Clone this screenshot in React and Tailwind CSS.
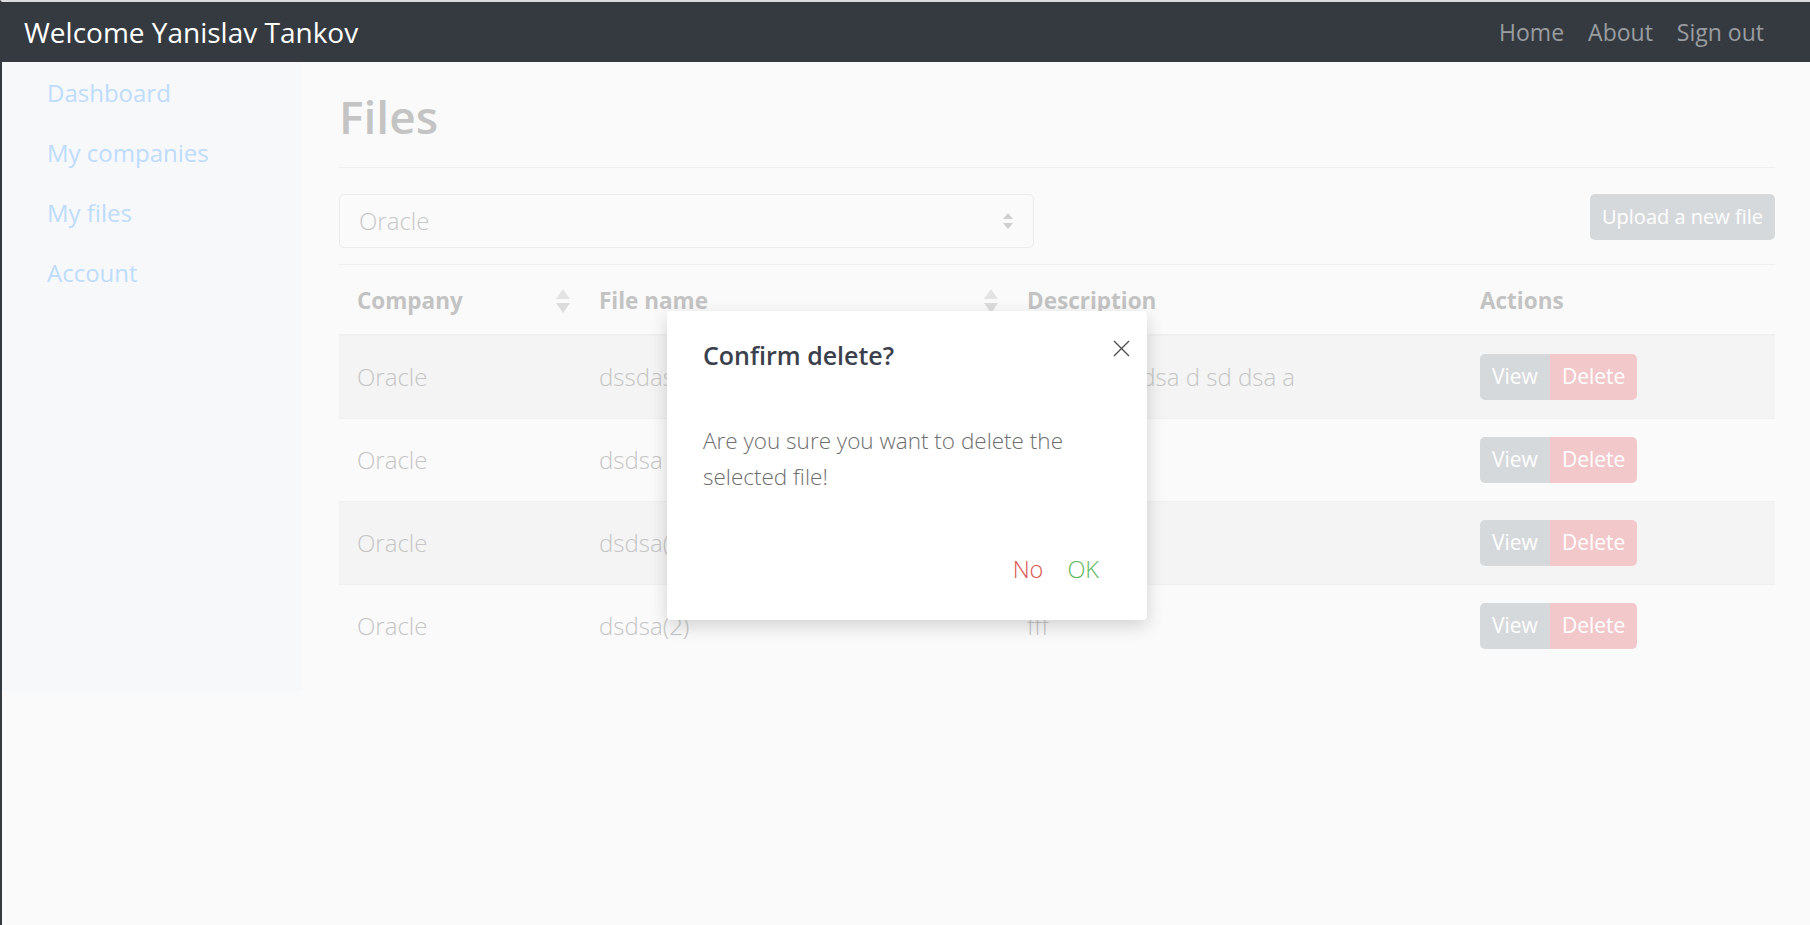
import React from 'react';

const rows = [
  { company: 'Oracle', file: 'dssdasd', desc: 'dsads dsa dsa d sd dsa a', striped: true },
  { company: 'Oracle', file: 'dsdsa', desc: '', striped: false },
  { company: 'Oracle', file: 'dsdsa(1)', desc: '', striped: true },
  { company: 'Oracle', file: 'dsdsa(2)', desc: 'fff', striped: false },
];

const SortIcon = () => (
  <svg width="14" height="24" viewBox="0 0 14 24" className="shrink-0">
    <polygon points="7,0 14,10 0,10" fill="#e3e3e3" />
    <polygon points="0,14 14,14 7,24" fill="#dcdcdc" />
  </svg>
);

const Sidebar = () => (
  <nav className="w-[300px] shrink-0 bg-[#f7f8fa] pt-[1px]">
    {['Dashboard', 'My companies', 'My files', 'Account'].map(item => (
      <a key={item} href="#" className="block pl-[45px] py-[12px] text-[24px] leading-[36px] text-[#bedcfd]">
        {item}
      </a>
    ))}
  </nav>
);

const ConfirmModal = () => (
  <div className="absolute top-[309px] left-[665px] w-[480px] h-[309px] bg-white rounded-[4px] shadow-[0_6px_18px_rgba(0,0,0,0.16)] z-10">
    <button className="absolute top-[29px] right-[17px] w-[17px] h-[17px]">
      <svg width="17" height="17" viewBox="0 0 17 17">
        <path d="M1 1 L16 16 M16 1 L1 16" stroke="#505050" strokeWidth="1.4" fill="none" />
      </svg>
    </button>
    <div className="px-[36px] pt-[26px]">
      <h5 className="text-[25px] leading-[36px] font-semibold text-[#3b414c]">Confirm delete?</h5>
    </div>
    <div className="px-[36px] pt-[50px]">
      <p className="text-[22.5px] leading-[36px] font-light text-[#6e6e6e]">
        Are you sure you want to delete the selected file!
      </p>
    </div>
    <div className="flex justify-end gap-[24px] pr-[48px] pt-[56px]">
      <button className="text-[23.5px] leading-[36px] font-light text-[#d9534f]">No</button>
      <button className="text-[23.5px] leading-[36px] font-light text-[#5cb85c]">OK</button>
    </div>
  </div>
);

const App = () => {
  return (
    <div className="relative min-h-screen bg-[#fafafa] border-t-2 border-t-[#dcdcdc] border-l-2 border-l-[#343a40] font-['Open_Sans',sans-serif]">
      <header className="h-[60px] bg-[#343a40] flex items-center justify-between pl-[22px] pr-[34px]">
        <span className="text-[28px] text-white leading-none">Welcome Yanislav Tankov</span>
        <div className="flex">
          {['Home', 'About', 'Sign out'].map(link => (
            <a key={link} href="#" className="px-[12px] text-[23px] text-[#9a9da0]">{link}</a>
          ))}
        </div>
      </header>

      <div className="flex">
        <Sidebar />
        <main className="flex-1 pl-[37px] pr-[35px] pt-[26px] pb-[24px]">
          <h2 className="text-[46px] leading-[57px] font-semibold text-[#c4c4c4] pb-[22px] border-b border-[#eeeeee]">Files</h2>

          <div className="flex justify-between items-start mt-[26px]">
            <div className="w-[695px] h-[54px] border border-[#ececec] rounded-[5px] flex items-center justify-between pl-[19px] pr-[20px]">
              <span className="text-[24px] font-light text-[#c8c8c8]">Oracle</span>
              <svg width="10" height="16" viewBox="0 0 10 16">
                <polygon points="5,0 10,6 0,6" fill="#cfcfcf" />
                <polygon points="0,10 10,10 5,16" fill="#cfcfcf" />
              </svg>
            </div>
            <button className="h-[46px] px-[12px] rounded-[5px] bg-[#d6d9dc] text-white text-[20px]">
              Upload a new file
            </button>
          </div>

          <table className="w-full table-fixed mt-[16px] border-collapse">
            <colgroup>
              <col className="w-[242px]" />
              <col className="w-[428px]" />
              <col className="w-[453px]" />
              <col className="w-[313px]" />
            </colgroup>
            <thead>
              <tr className="border-t border-[#eeeeee] border-b-2 border-b-[#f0f0f0]">
                <th className="pl-[18px] pr-[11px] pt-[18px] pb-[15px] text-left">
                  <div className="flex items-center justify-between text-[22.5px] leading-[36px] font-bold text-[#c3c3c3]">
                    Company <SortIcon />
                  </div>
                </th>
                <th className="pl-[18px] pr-[11px] pt-[18px] pb-[15px] text-left">
                  <div className="flex items-center justify-between text-[22.5px] leading-[36px] font-bold text-[#c3c3c3]">
                    File name <SortIcon />
                  </div>
                </th>
                <th className="px-[18px] pt-[18px] pb-[15px] text-left text-[22.5px] leading-[36px] font-bold text-[#c3c3c3]">Description</th>
                <th className="px-[18px] pt-[18px] pb-[15px] text-left text-[22.5px] leading-[36px] font-bold text-[#c3c3c3]">Actions</th>
              </tr>
            </thead>
            <tbody>
              {rows.map((row, i) => (
                <tr key={i} className={`border-t border-[#f0f0f0] ${row.striped ? 'bg-[#f4f4f4]' : ''}`}>
                  <td className="px-[18px] py-[18px] text-[24px] leading-[36px] font-light text-[#c6c6c6]">{row.company}</td>
                  <td className="px-[18px] py-[18px] text-[24px] leading-[36px] font-light text-[#c6c6c6]">{row.file}</td>
                  <td className="px-[18px] py-[18px] text-[24px] leading-[36px] font-light text-[#c6c6c6]">{row.desc}</td>
                  <td className="px-[18px] py-[18px]">
                    <div className="flex h-[46px]">
                      <button className="px-[12px] rounded-l-[5px] bg-[#d6d9dc] text-white text-[21px]">View</button>
                      <button className="px-[12px] rounded-r-[5px] bg-[#f2c8cb] text-white text-[21px]">Delete</button>
                    </div>
                  </td>
                </tr>
              ))}
            </tbody>
          </table>
        </main>
      </div>

      <ConfirmModal />
    </div>
  );
};

export default App;
